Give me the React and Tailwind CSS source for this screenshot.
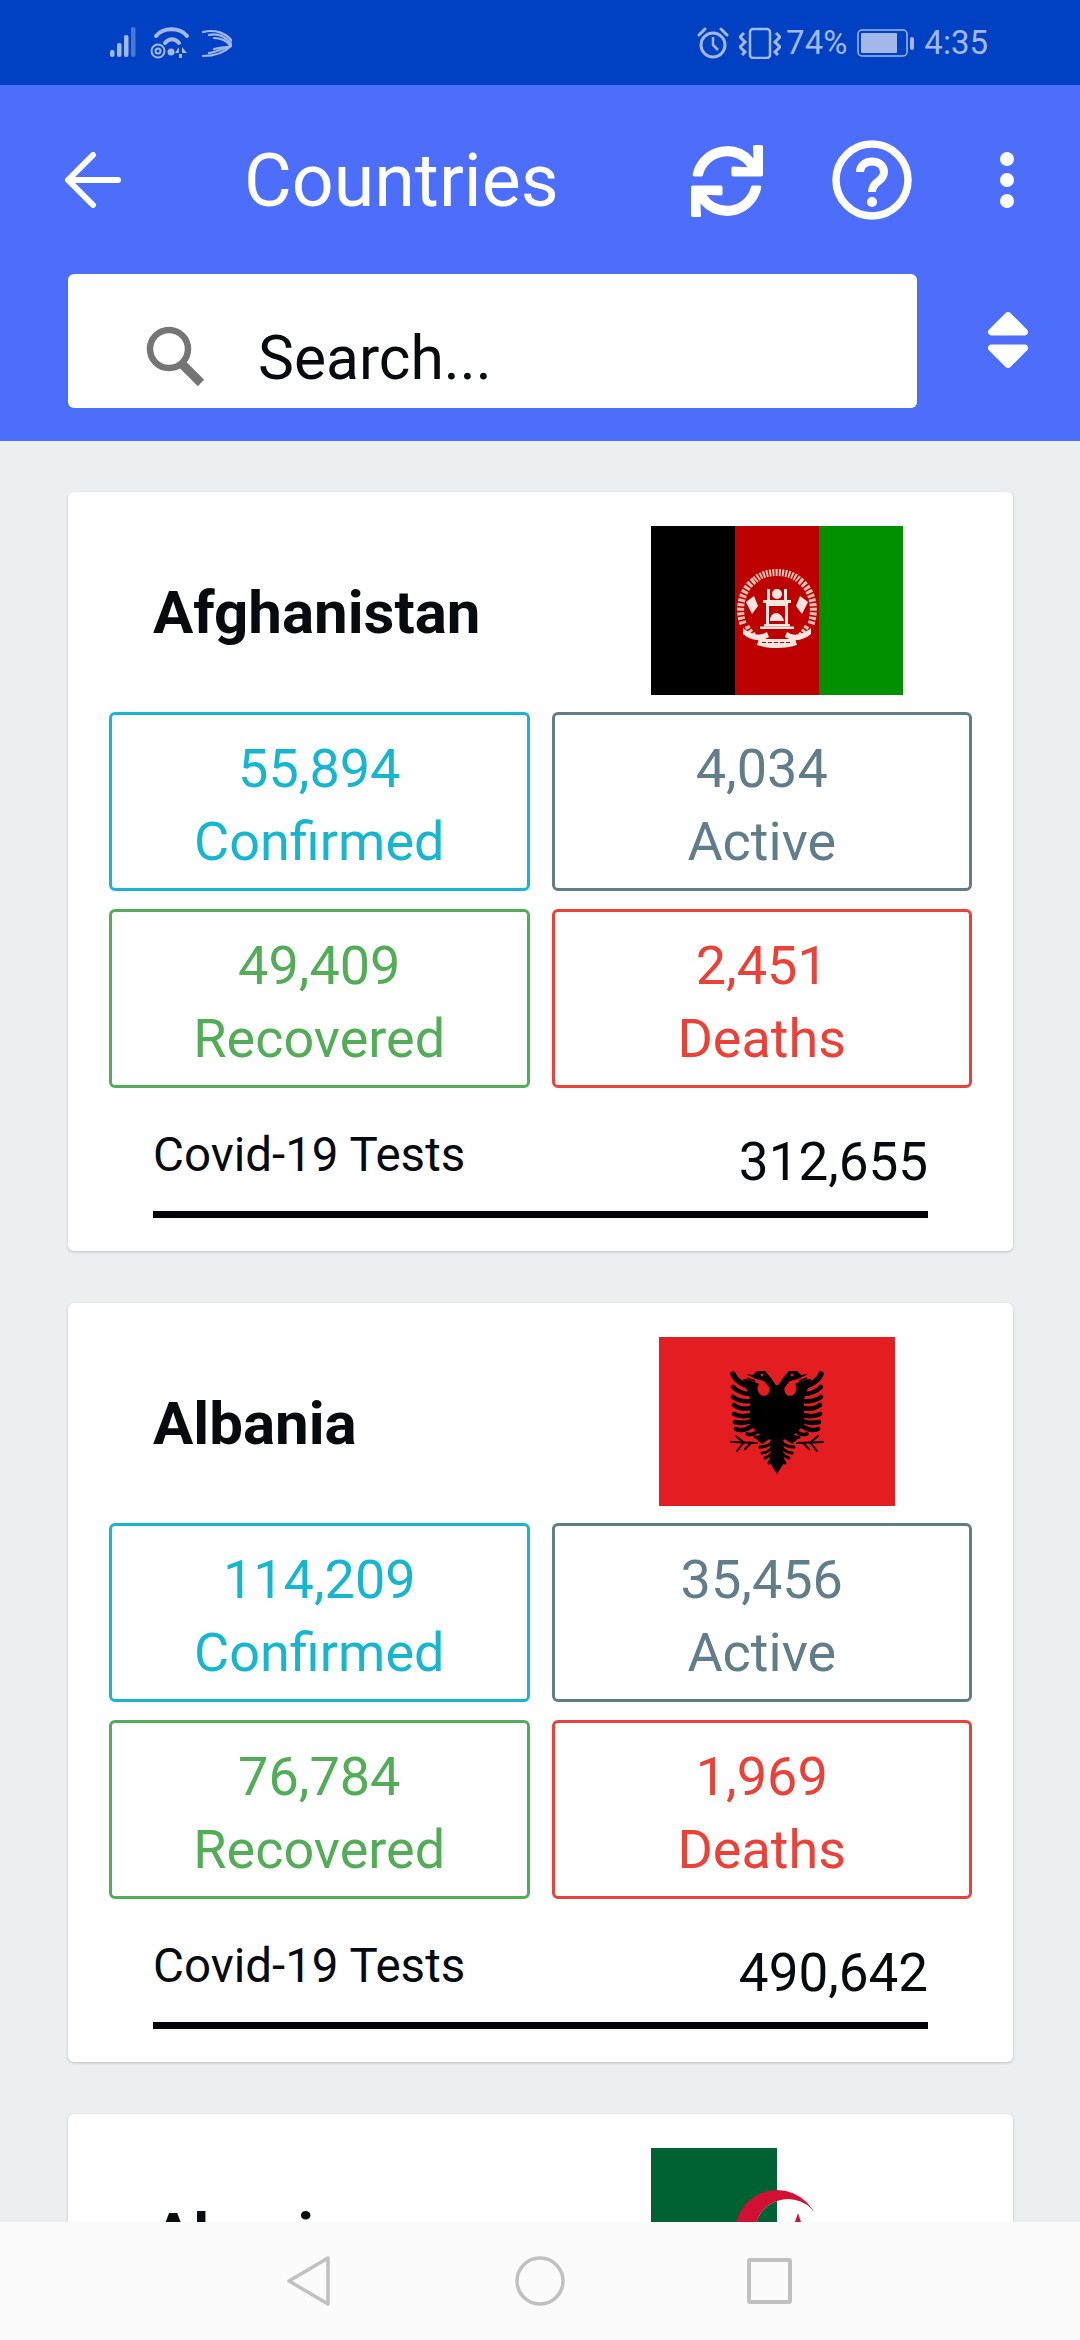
import React from "react";
import { FaSync, FaSort } from "react-icons/fa";

const countries = [
  {
    name: "Afghanistan",
    confirmed: "55,894",
    active: "4,034",
    recovered: "49,409",
    deaths: "2,451",
    tests: "312,655",
    flag: "af",
  },
  {
    name: "Albania",
    confirmed: "114,209",
    active: "35,456",
    recovered: "76,784",
    deaths: "1,969",
    tests: "490,642",
    flag: "al",
  },
  {
    name: "Algeria",
    confirmed: "105,124",
    active: "29,358",
    recovered: "71,207",
    deaths: "2,841",
    tests: "230,553",
    flag: "dz",
  },
];

const StatusIcons = () => (
  <svg width="122" height="32" viewBox="0 0 122 32" fill="none">
    <g fill="#a3b8e8">
      <rect x="0" y="23" width="4.5" height="7" rx="2" />
      <rect x="7" y="16" width="4.5" height="14" rx="2" />
      <rect x="14" y="8" width="4.5" height="22" rx="2" />
      <rect x="21" y="0" width="4.5" height="30" rx="2" opacity="0.45" />
    </g>
    <g stroke="#a3b8e8" strokeWidth="4" strokeLinecap="round">
      <path d="M46 9 C53 0 70 0 77 9" />
      <path d="M55 16 C59 11 65 11 69 16" />
      <circle cx="48" cy="24" r="6.5" strokeWidth="2" />
      <circle cx="48" cy="24" r="2.5" strokeWidth="2" />
    </g>
    <circle cx="61" cy="25" r="3.5" fill="#a3b8e8" />
    <path d="M69 20 l-4 6 h4z M72 20 l5 6 h-5z M69 27 h3 v4 h-3z" fill="#a3b8e8" />
    <g stroke="#a3b8e8" strokeWidth="2.2" strokeLinecap="round">
      <path d="M93 5 C105 2 116 6 122 14" />
      <path d="M99 8 C108 6 116 10 121 17" />
      <path d="M104 11 C111 11 117 14 121 19" />
      <path d="M121 19 C114 26 104 29 93 29" />
      <path d="M120 19 C112 22 106 25 99 26" />
      <path d="M118 20 C113 20 108 21 104 22" />
    </g>
  </svg>
);

const AlarmIcon = () => (
  <svg width="32" height="32" viewBox="0 0 32 32" fill="none" stroke="#a3b8e8" strokeWidth="3">
    <circle cx="16" cy="18" r="12" />
    <path d="M16 10 V18 L21 23" strokeWidth="2.5" />
    <path d="M2 8 L8 2 M24 2 L30 8" strokeLinecap="round" />
  </svg>
);

const VibrateIcon = () => (
  <svg width="42" height="32" viewBox="0 0 42 32" fill="none" stroke="#a3b8e8" strokeWidth="2.5">
    <rect x="11" y="2" width="20" height="29" rx="3" />
    <path d="M5 6 L1 10 L6 15 L1 20 L6 25 L3 28" strokeWidth="3" />
    <path d="M37 6 L41 10 L36 15 L41 20 L36 25 L39 28" strokeWidth="3" />
  </svg>
);

const BatteryIcon = () => (
  <svg width="58" height="28" viewBox="0 0 58 28" fill="none">
    <rect x="1" y="1" width="49" height="26" rx="4" stroke="#a3b8e8" strokeWidth="1.5" />
    <rect x="4" y="4" width="36" height="20" rx="1" fill="#a3b8e8" />
    <rect x="53" y="8" width="4" height="13" rx="2" fill="#a3b8e8" />
  </svg>
);

const StatusBar = () => (
  <div className="h-[85px] shrink-0 bg-[#0041c4] flex items-center pl-[110px] pr-[92px] text-[#a3b8e8] text-[33px] font-['Roboto',sans-serif]">
    <StatusIcons />
    <div className="ml-auto flex items-center">
      <AlarmIcon />
      <div className="ml-[10px]">
        <VibrateIcon />
      </div>
      <span className="ml-[5px] leading-none">74%</span>
      <div className="ml-[10px]">
        <BatteryIcon />
      </div>
      <span className="ml-[9px] leading-none">4:35</span>
    </div>
  </div>
);

const Toolbar = () => (
  <div className="h-[356px] shrink-0 bg-[#4d6dfb] flex flex-col">
    <div className="h-[189px] flex items-center pl-[65px] text-white">
      <svg width="56" height="56" viewBox="0 0 56 56" fill="none" stroke="white" strokeWidth="6" strokeLinecap="round" strokeLinejoin="round">
        <path d="M53 28 H4 M28 3 L3 28 L28 53" />
      </svg>
      <span className="ml-[123px] pt-[4px] text-[73.5px] leading-none font-['Roboto',sans-serif]">Countries</span>
      <FaSync className="ml-[132px] mt-[2px] w-[72px] h-[72px]" />
      <svg className="ml-[69px]" width="80" height="80" viewBox="0 0 80 80" fill="none" stroke="white">
        <circle cx="40" cy="40" r="36" strokeWidth="7.5" />
        <path d="M28 32 C28 18 52 18 52 32 C52 42 40 41 40 52" strokeWidth="8" />
        <circle cx="40" cy="62" r="5" fill="white" stroke="none" />
      </svg>
      <svg className="ml-[88px]" width="14" height="56" viewBox="0 0 14 56" fill="white">
        <circle cx="7" cy="7" r="7" />
        <circle cx="7" cy="28" r="7" />
        <circle cx="7" cy="49" r="7" />
      </svg>
    </div>
    <div className="flex items-start pl-[68px]">
      <div className="w-[849px] h-[134px] bg-white rounded-[6px] flex items-center pl-[78px] pt-[16px]">
        <svg className="mt-[14px]" width="60" height="60" viewBox="0 0 60 60" fill="none" stroke="#757575">
          <circle cx="23" cy="23" r="19" strokeWidth="6.5" />
          <path d="M35 37 L55 57" strokeWidth="9" />
        </svg>
        <span className="ml-[52px] pt-[20px] text-[60.5px] leading-none text-[#070b10] font-['Roboto',sans-serif]">Search...</span>
      </div>
      <FaSort className="ml-[66px] mt-[30px] w-[50px] h-[72px] text-white" />
    </div>
  </div>
);

const AfghanFlag = () => (
  <svg width="252" height="169" viewBox="0 0 252 169">
    <rect width="84" height="169" fill="#000" />
    <rect x="84" width="84" height="169" fill="#bd0000" />
    <rect x="168" width="84" height="169" fill="#009000" />
    {/* wreath and inscription around the mosque */}
    <g fill="none" stroke="#eebfb2">
      <path d="M92 98 C86 80 92 62 104 54" strokeWidth="7" strokeDasharray="3 1.5" />
      <path d="M160 98 C166 80 160 62 148 54" strokeWidth="7" strokeDasharray="3 1.5" />
      <path d="M104 54 C114 44 138 44 148 54" strokeWidth="7" strokeDasharray="2 1.2" />
      <path d="M96 100 C100 108 106 112 112 114" strokeWidth="5" strokeDasharray="3 1.5" />
      <path d="M156 100 C152 108 146 112 140 114" strokeWidth="5" strokeDasharray="3 1.5" />
    </g>
    <g fill="#f7e6e0">
      <circle cx="126" cy="68" r="5" />
      <rect x="116" y="63" width="3" height="11" />
      <rect x="133" y="63" width="3" height="11" />
      <rect x="112" y="74" width="28" height="3" />
      <rect x="115" y="77" width="3" height="21" />
      <rect x="134" y="77" width="3" height="21" />
      <rect x="118" y="77" width="16" height="3" />
      <path d="M119 95 C119 85 130 84 133 95 Z" />
      <rect x="113" y="98" width="26" height="2.5" />
      <rect x="109" y="100.5" width="34" height="2.5" />
      <path d="M92 102 C102 110 110 110 116 106 L118 111 C110 116 100 115 92 108 Z" />
      <path d="M160 102 C150 110 142 110 136 106 L134 111 C142 116 152 115 160 108 Z" />
      <path d="M108 113 H144 L146 119 C135 123 117 123 106 119 Z" />
      <path d="M95 76 L103 70 L107 80 L101 88 Z" />
      <path d="M157 76 L149 70 L145 80 L151 88 Z" />
    </g>
    <path d="M111 116.5 H141" stroke="#bd0000" strokeWidth="1.2" strokeDasharray="4 2" />
  </svg>
);

const EagleHalf = () => (
  <g>
    {/* head and beak */}
    <path d="M118 50 L112 41 L106 34 L98 34 L94 38 L87 37 L97 42 L105 44 L110 50 Z" fill="#000" />
    <circle cx="103" cy="38" r="1.4" fill="#e41e20" />
    <path d="M88 41 L96 44" stroke="#000" strokeWidth="1.5" />
    {/* body and inner wing */}
    <path d="M118 48 L110 49 C113 58 104 62 100 56 C98 53 98 50 100 47 C94 44 88 42 84 42 L91 62 L91 88 L100 97 L118 106 Z" fill="#000" />
    {/* wing feathers */}
    <g stroke="#000" strokeWidth="4.5" strokeLinecap="round" fill="none">
      <path d="M92 50 C84 48 76 43 74 37" strokeWidth="5.5" />
      <path d="M92 57 C84 57 78 54 74 50" />
      <path d="M92 64 C84 65 78 63 74 60" />
      <path d="M92 71 C84 73 79 71 75 68" />
      <path d="M92 78 C85 80 79 79 75 77" />
      <path d="M92 84 C85 87 80 86 76 85" />
      <path d="M94 88 C88 93 82 94 77 92" />
      <path d="M100 92 C97 97 92 98 88 97" strokeWidth="3.5" />
      <path d="M105 95 C103 99 100 101 96 100" strokeWidth="3" />
    </g>
    {/* leg */}
    <path d="M108 96 L95 100 L103 107 L112 101 Z" fill="#000" />
    <g stroke="#000" strokeWidth="2" strokeLinecap="round" fill="none">
      <path d="M98 106 L72 105" />
      <path d="M84 105 L77 99 M85 105 L78 114 M92 106 L86 112" />
    </g>
    {/* tail */}
    <path d="M118 100 L111 104 L112 118 L111 126 L118 137 Z" fill="#000" />
    <g stroke="#000" strokeWidth="3" strokeLinecap="round" fill="none">
      <path d="M113 106 C109 109 104 110 101 110" />
      <path d="M113 111 C110 114 106 116 103 116" />
      <path d="M113 116 C111 119 109 120 106 121" />
      <path d="M113 120 C112 123 111 125 110 126" />
    </g>
  </g>
);

const AlbanianFlag = () => (
  <svg width="236" height="169" viewBox="0 0 236 169">
    <rect width="236" height="169" fill="#e41e20" />
    <EagleHalf />
    <g transform="translate(236 0) scale(-1 1)">
      <EagleHalf />
    </g>
  </svg>
);

const AlgerianFlag = () => (
  <svg width="252" height="169" viewBox="0 0 252 169">
    <defs>
      <clipPath id="dz-left">
        <rect width="126" height="169" />
      </clipPath>
    </defs>
    <rect width="126" height="169" fill="#006233" />
    <rect x="126" width="126" height="169" fill="#fff" />
    <circle cx="126" cy="84" r="42" fill="#d21034" />
    <circle cx="137" cy="84" r="33" fill="#fff" />
    <circle cx="137" cy="84" r="33" fill="#006233" clipPath="url(#dz-left)" />
    <path d="M147 65 L152 80 L168 80 L155 90 L160 105 L147 96 L134 105 L139 90 L126 80 L142 80 Z" fill="#d21034" />
  </svg>
);

const flags = { af: AfghanFlag, al: AlbanianFlag, dz: AlgerianFlag };

const StatBox = ({ value, label, boxClass }) => (
  <div className={`h-[179px] border-[3px] rounded-[6px] flex flex-col items-center justify-center pt-[6px] text-[54px] leading-[73px] ${boxClass}`}>
    <span>{value}</span>
    <span>{label}</span>
  </div>
);

const CountryCard = ({ country }) => {
  const Flag = flags[country.flag];
  return (
    <div className="h-[759px] shrink-0 bg-white rounded-[6px] shadow-[0_1px_3px_rgba(0,0,0,0.2)] px-[41px] pt-[34px] font-['Roboto',sans-serif]">
      <div className="h-[169px] flex items-center">
        <h2 className="ml-[44px] flex-1 pt-[5px] text-[60px] leading-none font-bold text-[#070b10]">
          {country.name}
        </h2>
        <div className="w-[252px] mr-[69px] flex justify-center">
          <Flag />
        </div>
      </div>
      <div className="mt-[17px] grid grid-cols-2 gap-x-[22px] gap-y-[18px]">
        <StatBox value={country.confirmed} label="Confirmed" boxClass="border-[#17b6d0] text-[#17b6d0]" />
        <StatBox value={country.active} label="Active" boxClass="border-[#607d8b] text-[#607d8b]" />
        <StatBox value={country.recovered} label="Recovered" boxClass="border-[#52ad56] text-[#52ad56]" />
        <StatBox value={country.deaths} label="Deaths" boxClass="border-[#ea4238] text-[#ea4238]" />
      </div>
      <div className="mx-[44px] mt-[22px] h-[108px] border-b-[7px] border-[#000308] flex justify-between text-[#070b10]">
        <span className="mt-[22px] text-[47.5px] leading-none">Covid-19 Tests</span>
        <span className="mt-[26px] text-[53px] leading-none">{country.tests}</span>
      </div>
    </div>
  );
};

const NavBar = () => (
  <div className="h-[118px] shrink-0 bg-[#fbfbfb] flex items-start pt-[34px] pl-[287px]">
    <svg width="44" height="50" viewBox="0 0 44 50" fill="none" stroke="#c0c0c0" strokeWidth="3.5" strokeLinejoin="round">
      <path d="M41 2 V48 L2 25 Z" />
    </svg>
    <svg className="ml-[184px]" width="50" height="50" viewBox="0 0 50 50" fill="none" stroke="#c0c0c0" strokeWidth="3.5">
      <circle cx="25" cy="25" r="23" />
    </svg>
    <svg className="ml-[182px] mt-[2px]" width="45" height="46" viewBox="0 0 45 46" fill="none" stroke="#c0c0c0" strokeWidth="4" strokeLinejoin="round">
      <rect x="2" y="2" width="41" height="42" rx="1" />
    </svg>
  </div>
);

export default function App() {
  return (
    <div className="w-[1080px] h-[2340px] flex flex-col overflow-hidden bg-[#ebeff2]">
      <StatusBar />
      <Toolbar />
      <div className="flex-1 min-h-0 overflow-hidden pl-[68px] pr-[67px] pt-[51px] flex flex-col gap-[52px]">
        {countries.map((country) => (
          <CountryCard key={country.name} country={country} />
        ))}
      </div>
      <NavBar />
    </div>
  );
}
